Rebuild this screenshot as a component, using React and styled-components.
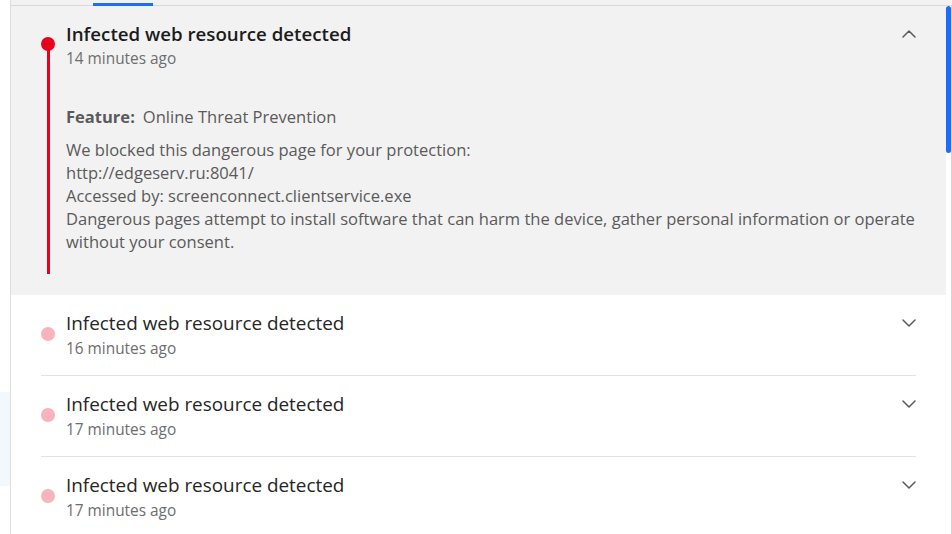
import React from "react";
import styled, { createGlobalStyle } from "styled-components";

const Global = createGlobalStyle`
  html, body { margin: 0; padding: 0; background: #ffffff; }
  body { font-family: "Open Sans", "Noto Sans", sans-serif; -webkit-font-smoothing: antialiased; }
  * { box-sizing: border-box; }
`;

const Page = styled.div`
  display: flex;
  height: 534px;
  width: 952px;
  overflow: hidden;
  background: #fff;
`;

const Rail = styled.div`
  width: 10px;
  flex: none;
  display: flex;
  flex-direction: column;
  padding-top: 392px;
`;

const RailHighlight = styled.div`
  height: 94px;
  background: #f3f7fe;
`;

const Main = styled.div`
  flex: 1;
  display: flex;
  flex-direction: column;
  border-left: 1px solid #dedede;
  min-width: 0;
`;

const TabBar = styled.div`
  height: 6px;
  flex: none;
  background: #f2f2f2;
  border-bottom: 1px solid #d9d9d9;
  display: flex;
  align-items: flex-end;
  padding-left: 82px;
`;

const TabIndicator = styled.div`
  width: 60px;
  height: 4px;
  margin-bottom: -2px;
  background: #1a6dff;
`;

const Body = styled.div`
  flex: 1;
  display: flex;
  min-height: 0;
`;

const List = styled.div`
  flex: 1;
  display: flex;
  flex-direction: column;
  overflow: hidden;
`;

const ScrollTrack = styled.div`
  width: 6px;
  flex: none;
  border-right: 1px solid #d4d4d4;
  display: flex;
  flex-direction: column;
`;

const ScrollThumb = styled.div`
  width: 5px;
  height: 147px;
  border-radius: 3px;
  background: #1a6dff;
`;

const Item = styled.div`
  flex: none;
  background: ${(p) => (p.$open ? "#f2f2f2" : "transparent")};
  padding: 0 30px;
`;

const ItemInner = styled.div`
  display: grid;
  grid-template-columns: 14px 1fr 14px;
  grid-template-rows: auto auto;
  column-gap: 11px;
  padding: ${(p) => (p.$open ? "16px 0 21px" : "16px 0 14px")};
  border-bottom: ${(p) => (p.$open ? "none" : "1px solid #e3e3e3")};
`;

const Marker = styled.div`
  grid-column: 1;
  grid-row: 1 / span 2;
  display: flex;
  flex-direction: column;
  align-items: center;
  padding-top: ${(p) => (p.$open ? "15px" : "16px")};
`;

const Dot = styled.div`
  width: 14px;
  height: 14px;
  border-radius: 50%;
  flex: none;
  background: ${(p) => (p.$open ? "#e8001c" : "#f9b3bd")};
`;

const Stem = styled.div`
  width: 3px;
  flex: 1;
  background: #e8001c;
  margin-top: -1px;
`;

const Header = styled.div`
  grid-column: 2;
  grid-row: 1;
  min-width: 0;
`;

const Title = styled.div`
  font-size: ${(p) => (p.$open ? "18.7px" : "18.9px")};
  line-height: 24px;
  color: ${(p) => (p.$open ? "#1b1b1b" : "#262626")};
  font-weight: ${(p) => (p.$open ? 600 : 400)};
  white-space: nowrap;
`;

const Time = styled.div`
  font-size: 15.4px;
  line-height: 24px;
  margin-top: ${(p) => (p.$open ? "1px" : "2px")};
  color: #6e6e6e;
`;

const Details = styled.div`
  grid-column: 2 / 4;
  grid-row: 2;
  padding-top: 34px;
  padding-bottom: 21px;
  font-size: 16.55px;
  line-height: 23px;
  color: #5a5a5a;
`;

const FeatureLine = styled.div`
  margin-bottom: 10px;
`;

const FeatureLabel = styled.span`
  font-weight: 700;
  color: #5a5a5a;
  margin-right: 8px;
`;

const Para = styled.div``;

const Toggle = styled.div`
  grid-column: 3;
  grid-row: 1;
  height: 24px;
  display: flex;
  align-items: center;
  justify-content: center;
`;

const Chevron = ({ up }) => (
  <svg width="14" height="8" viewBox="0 0 14 8" fill="none">
    <polyline
      points={up ? "1,7 7,1 13,7" : "1,1 7,7 13,1"}
      stroke="#5a5a5a"
      strokeWidth="1.5"
      strokeLinecap="round"
      strokeLinejoin="round"
    />
  </svg>
);

const events = [
  { time: "14 minutes ago", open: true },
  { time: "16 minutes ago" },
  { time: "17 minutes ago" },
  { time: "17 minutes ago" },
];

export default function App() {
  return (
    <>
      <Global />
      <Page>
        <Rail>
          <RailHighlight />
        </Rail>
        <Main>
          <TabBar>
            <TabIndicator />
          </TabBar>
          <Body>
            <List>
              {events.map((e, i) => (
                <Item key={i} $open={e.open}>
                  <ItemInner $open={e.open}>
                    <Marker $open={e.open}>
                      <Dot $open={e.open} />
                      {e.open && <Stem />}
                    </Marker>
                    <Header>
                      <Title $open={e.open}>Infected web resource detected</Title>
                      <Time $open={e.open}>{e.time}</Time>
                    </Header>
                    <Toggle>
                      <Chevron up={e.open} />
                    </Toggle>
                    {e.open && (
                      <Details>
                        <FeatureLine>
                          <FeatureLabel>Feature:</FeatureLabel>Online Threat Prevention
                        </FeatureLine>
                        <Para>We blocked this dangerous page for your protection:</Para>
                        <Para>http://edgeserv.ru:8041/</Para>
                        <Para>Accessed by: screenconnect.clientservice.exe</Para>
                        <Para>
                          Dangerous pages attempt to install software that can harm the device, gather personal
                          information or operate without your consent.
                        </Para>
                      </Details>
                    )}
                  </ItemInner>
                </Item>
              ))}
            </List>
            <ScrollTrack>
              <ScrollThumb />
            </ScrollTrack>
          </Body>
        </Main>
      </Page>
    </>
  );
}
